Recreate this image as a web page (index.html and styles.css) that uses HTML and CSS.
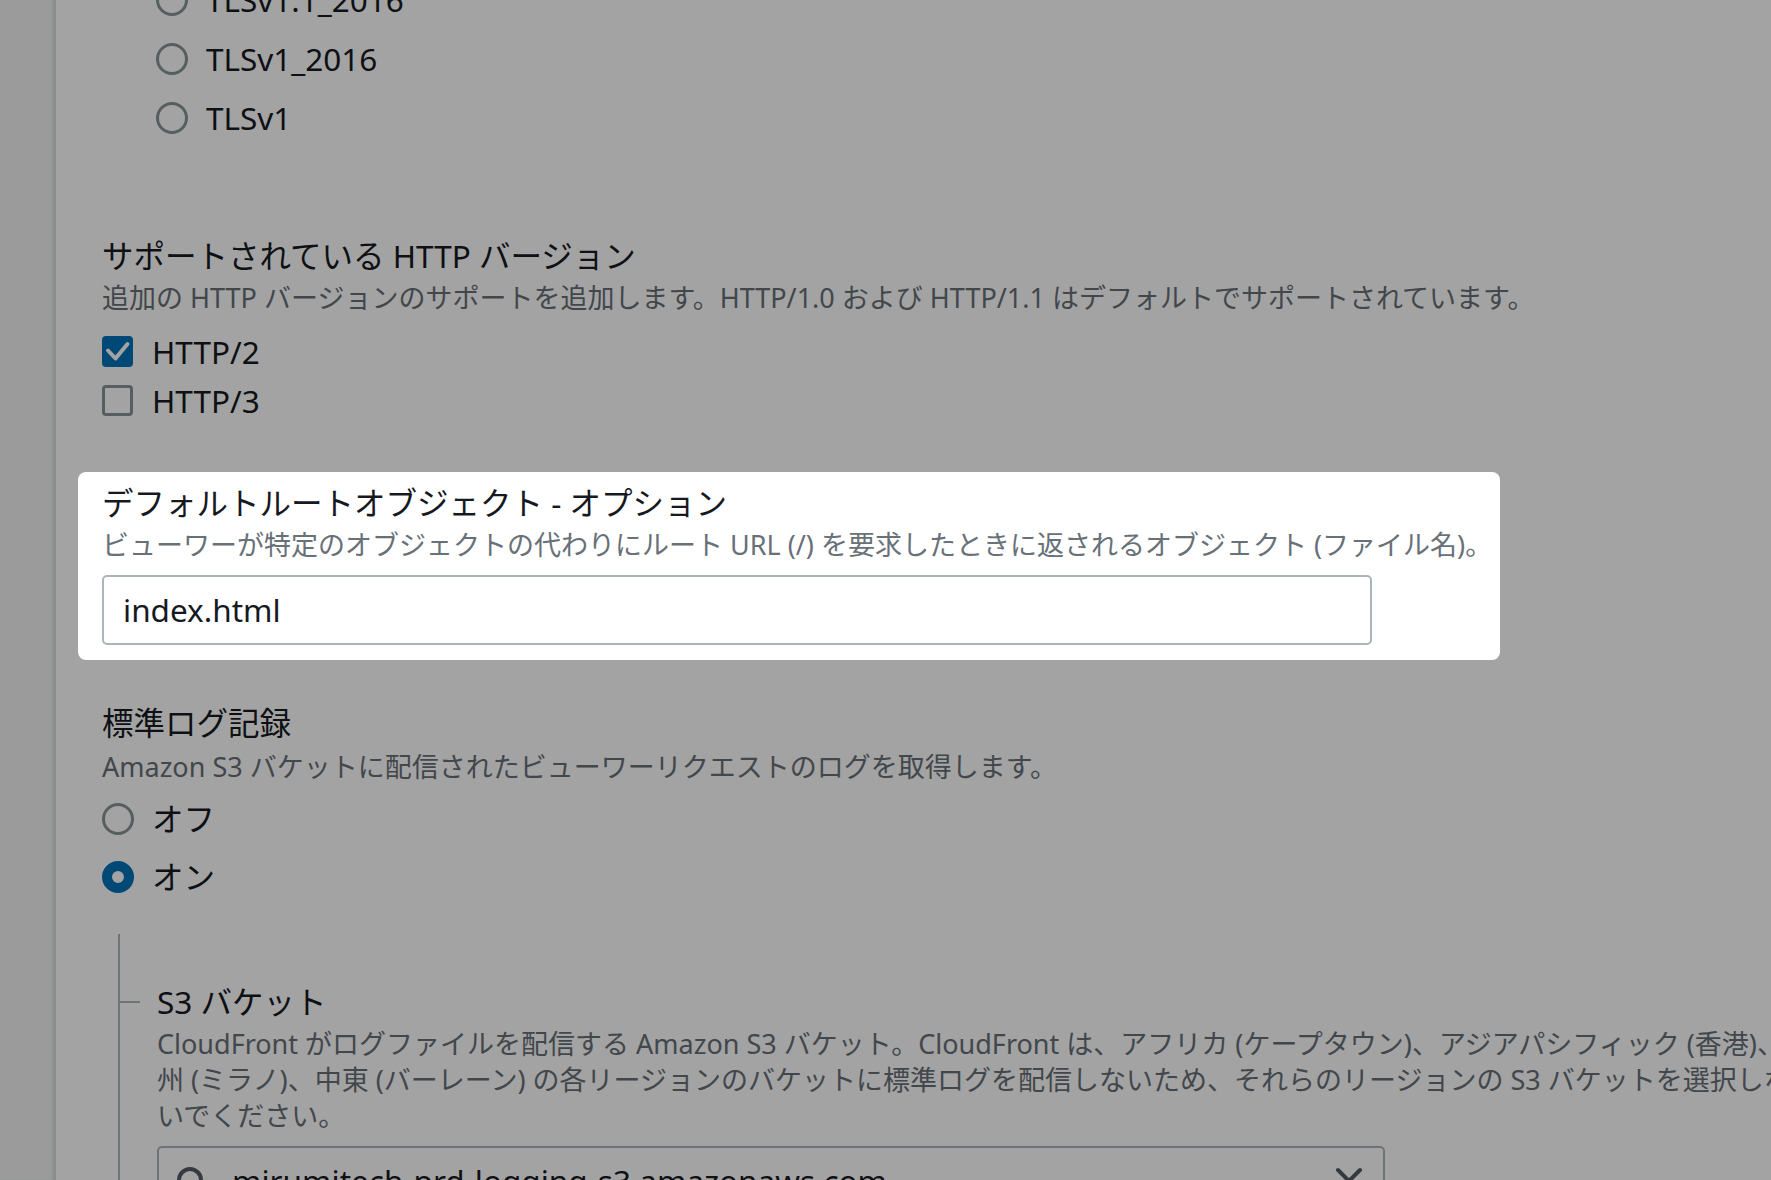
FILE: index.html
```html
<!DOCTYPE html>
<html lang="ja">
<head>
<meta charset="utf-8">
<title>CloudFront settings</title>
<link rel="stylesheet" href="styles.css">
</head>
<body>
<div class="app">
  <aside class="sidebar"></aside>
  <main class="main">
    <div class="tls-group">
      <div class="radio-row"><span class="radio"></span><span class="opt-label">TLSv1.1_2016</span></div>
      <div class="radio-row"><span class="radio"></span><span class="opt-label">TLSv1_2016</span></div>
      <div class="radio-row"><span class="radio"></span><span class="opt-label">TLSv1</span></div>
    </div>

    <section class="field field-http">
      <div class="field-label">サポートされている HTTP バージョン</div>
      <div class="field-desc">追加の HTTP バージョンのサポートを追加します。HTTP/1.0 および HTTP/1.1 はデフォルトでサポートされています。</div>
      <div class="check-list">
        <div class="check-row">
          <span class="checkbox checked"><svg viewBox="0 0 31 31" width="31" height="31"><path d="M6 14.5 L13.5 22.5 L25.5 8" fill="none" stroke="#fff" stroke-width="4" stroke-linecap="round" stroke-linejoin="round"/></svg></span>
          <span class="opt-label">HTTP/2</span>
        </div>
        <div class="check-row">
          <span class="checkbox"></span>
          <span class="opt-label">HTTP/3</span>
        </div>
      </div>
    </section>

    <section class="field spotlight">
      <div class="field-label">デフォルトルートオブジェクト - オプション</div>
      <div class="field-desc nowrap">ビューワーが特定のオブジェクトの代わりにルート URL (/) を要求したときに返されるオブジェクト (ファイル名)。</div>
      <div class="text-input"><span class="input-value">index.html</span></div>
    </section>

    <section class="field field-log">
      <div class="field-label">標準ログ記録</div>
      <div class="field-desc">Amazon S3 バケットに配信されたビューワーリクエストのログを取得します。</div>
      <div class="radio-list">
        <div class="radio-row"><span class="radio"></span><span class="opt-label">オフ</span></div>
        <div class="radio-row"><span class="radio checked"></span><span class="opt-label">オン</span></div>
      </div>
    </section>

    <div class="nested">
      <div class="nested-head"><span class="tick"></span><span class="field-label">S3 バケット</span></div>
      <div class="field-desc nested-desc">CloudFront がログファイルを配信する Amazon S3 バケット。CloudFront は、アフリカ (ケープタウン)、アジアパシフィック (香港)、欧<br>州 (ミラノ)、中東 (バーレーン) の各リージョンのバケットに標準ログを配信しないため、それらのリージョンの S3 バケットを選択しな<br>いでください。</div>
      <div class="text-input search-input">
        <svg class="icon" viewBox="0 0 36 36" width="36" height="36"><circle cx="15" cy="17" r="11" fill="none" stroke="#545b64" stroke-width="4"/><path d="M23 25 L32 34" stroke="#545b64" stroke-width="4" stroke-linecap="round"/></svg>
        <span class="input-value grow">mirumitech-prd-logging-s3.amazonaws.com</span>
        <svg class="icon" viewBox="0 0 36 36" width="36" height="36"><path d="M7 7 L29 29 M29 7 L7 29" fill="none" stroke="#545b64" stroke-width="4" stroke-linecap="round"/></svg>
      </div>
    </div>
  </main>
</div>
</body>
</html>
```

FILE: styles.css
```css
html, body {
  margin: 0;
  padding: 0;
}

body {
  width: 1771px;
  height: 1180px;
  overflow: hidden;
  background: #ffffff;
  font-family: "Noto Sans", "Noto Sans CJK JP", sans-serif;
  color: #16191f;
}

.app {
  display: flex;
  height: 1180px;
}

.sidebar {
  flex: none;
  width: 55px;
  background: #f2f3f3;
  border-right: 1px solid #d5dbdb;
  box-shadow: inset -4px 0 4px -3px rgba(0, 0, 0, 0.18);
}

.main {
  flex: 1;
  min-width: 0;
  padding-left: 46px;
}

/* radios */
.tls-group {
  margin-top: -30px;
  margin-left: 54px;
}

.radio-row {
  display: flex;
  align-items: center;
  height: 59px;
  gap: 18px;
}

.radio-list .radio-row {
  height: 58px;
}

.radio {
  flex: none;
  box-sizing: border-box;
  width: 32px;
  height: 32px;
  border: 3px solid #879596;
  border-radius: 50%;
  background: #ffffff;
}

.radio.checked {
  border: 10px solid #0073bb;
}

.opt-label {
  font-size: 31.5px;
  line-height: 45px;
  white-space: nowrap;
}

/* fields */
.field-label {
  font-size: 31.5px;
  line-height: 45px;
  white-space: nowrap;
}

.field-desc {
  margin-top: 2px;
  font-size: 27px;
  line-height: 36px;
  color: #687078;
}

.nowrap {
  white-space: nowrap;
}

.field-http {
  margin-top: 86px;
}

.check-list {
  margin-top: 11px;
}

.check-row {
  display: flex;
  align-items: center;
  gap: 19px;
  height: 49px;
}

.checkbox {
  flex: none;
  box-sizing: border-box;
  width: 31px;
  height: 31px;
  border: 3px solid #879596;
  border-radius: 4px;
  background: #ffffff;
  display: flex;
}

.checkbox.checked {
  border: none;
  background: #0073bb;
}

/* highlighted field */
.spotlight {
  position: relative;
  z-index: 10;
  box-sizing: border-box;
  width: 1422px;
  margin-top: 46.5px;
  margin-left: -24px;
  padding: 8.5px 16px 15px 24px;
  background: #ffffff;
  border-radius: 8px;
  box-shadow: 0 0 0 4000px rgba(0, 0, 0, 0.36);
}

.text-input {
  display: flex;
  align-items: center;
  box-sizing: border-box;
  height: 70px;
  border: 2px solid #aab7b8;
  border-radius: 5px;
  background: #ffffff;
}

.spotlight .text-input {
  width: 1270px;
  margin-top: 11.5px;
  padding-left: 19px;
}

.input-value {
  font-size: 31.5px;
  line-height: 45px;
  color: #16191f;
  white-space: nowrap;
}

.grow {
  flex: 1;
  overflow: hidden;
}

/* logging */
.field-log {
  margin-top: 40px;
}

.field-log .field-desc {
  margin-top: 4px;
}

.radio-list {
  margin-top: 5px;
}

.nested {
  margin-top: 28px;
  margin-left: 16px;
  border-left: 2px solid #aab7b8;
  padding-top: 45.5px;
  height: 400px;
}

.nested-head {
  display: flex;
  align-items: center;
}

.tick {
  flex: none;
  width: 20px;
  height: 2px;
  background: #aab7b8;
  margin-right: 17px;
}

.nested-desc {
  margin-top: 1.5px;
  padding-left: 37px;
  white-space: nowrap;
}

.search-input {
  width: 1228px;
  margin-top: 12px;
  margin-left: 37px;
  padding: 0 16px;
  gap: 21px;
}

.icon {
  flex: none;
  display: block;
}
```
